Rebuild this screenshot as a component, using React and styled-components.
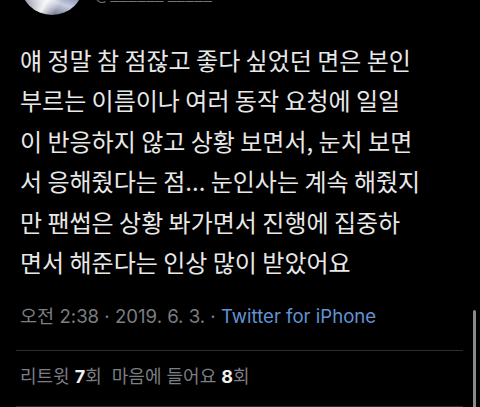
import React from 'react'
import styled, { createGlobalStyle } from 'styled-components'

const GlobalStyle = createGlobalStyle`
	html, body {
		margin: 0;
		background: #000;
		overflow: hidden;
	}
	body {
		font-family: Inter, "Noto Sans CJK KR", sans-serif;
	}
`

const Page = styled.div`
	position: relative;
	width: 480px;
	height: 407px;
	padding: 0 17px 0 16px;
	box-sizing: border-box;
	background: #000;
	overflow: hidden;
`
const Header = styled.div`
	display: flex;
	align-items: center;
	gap: 11px;
	margin: -49px 0 0 4px;
`
const Avatar = styled.div`
	width: 64px;
	height: 64px;
	border-radius: 50%;
	flex-shrink: 0;
	background:
		linear-gradient(120deg, transparent 30%, rgba(255,255,255,0.9) 55%, transparent 70%),
		linear-gradient(200deg, #1b1e2e 0%, #4b5a8e 45%, #c9cde0 70%, #2a2f45 100%);
`
const Names = styled.div`
	display: flex;
	flex-direction: column;
	font-family: "Noto Sans CJK KR", sans-serif;
	font-size: 16px;
	line-height: 20px;
`
const Name = styled.span`
	color: #e7e9ea;
	font-weight: bold;
`
const Handle = styled.span`
	color: #71767b;
`
const Body = styled.p`
	margin: 25px 0 0 4px;
	font-family: "Noto Sans CJK KR", sans-serif;
	font-size: 24px;
	line-height: 40.4px;
	color: #e8e8e8;
	white-space: nowrap;
`
const Meta = styled.div`
	margin: 22px 0 0 4px;
	font-family: Inter, "Noto Sans CJK KR", sans-serif;
	font-size: 18.6px;
	line-height: 24px;
	color: #7b7e82;
	white-space: nowrap;
`
const Source = styled.span`
	color: #6293d4;
`
const Divider = styled.div`
	height: 1px;
	background: #2b2e31;
	margin-top: ${props => props.gap}px;
`
const Stats = styled.div`
	display: flex;
	gap: 10px;
	margin: 12px 0 0 4px;
	font-family: Inter, "Noto Sans CJK KR", sans-serif;
	font-size: 18px;
	line-height: 28px;
	color: #7b7e82;
`
const Count = styled.b`
	color: #f0f0f0;
	font-weight: bold;
`
const ScrollThumb = styled.div`
	position: absolute;
	right: 4px;
	top: 310px;
	width: 3px;
	height: 120px;
	border-radius: 2px;
	background: #8a8a8a;
`

export default function App() {
	return (
		<Page>
			<GlobalStyle />
			<Header>
				<Avatar />
				<Names>
					<Name>　</Name>
					<Handle>@______ _____</Handle>
				</Names>
			</Header>
			<Body>
				얘 정말 참 점잖고 좋다 싶었던 면은 본인<br />
				부르는 이름이나 여러 동작 요청에 일일<br />
				이 반응하지 않고 상황 보면서, 눈치 보면<br />
				서 응해줬다는 점... 눈인사는 계속 해줬지<br />
				만 팬썹은 상황 봐가면서 진행에 집중하<br />
				면서 해준다는 인상 많이 받았어요
			</Body>
			<Meta>
				오전 2:38 · 2019. 6. 3. · <Source>Twitter for iPhone</Source>
			</Meta>
			<Divider gap={22} />
			<Stats>
				<span>리트윗 <Count>7</Count>회</span>
				<span>마음에 들어요 <Count>8</Count>회</span>
			</Stats>
			<Divider gap={15} />
			<ScrollThumb />
		</Page>
	)
}
